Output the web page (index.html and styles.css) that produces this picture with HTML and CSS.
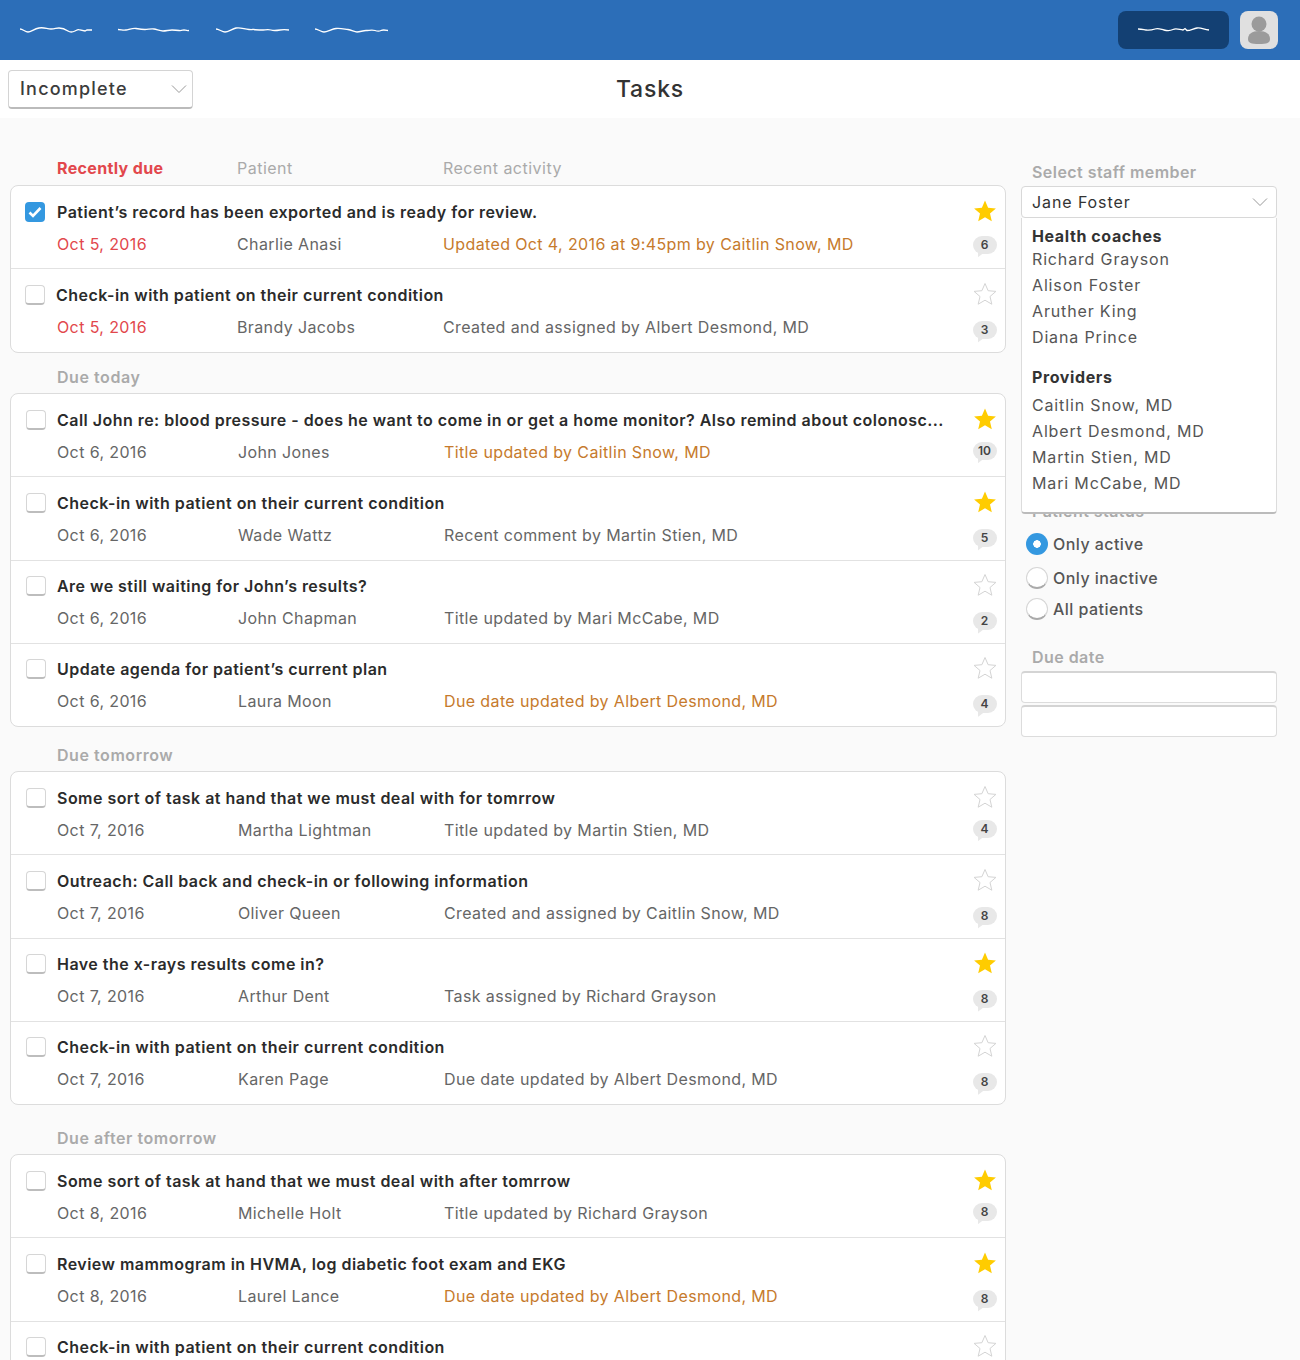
FILE: index.html
```html
<!DOCTYPE html>
<html lang="en">
<head>
    <meta charset="UTF-8">
    <meta name="viewport" content="width=device-width, initial-scale=1.0">
    <title>Tasks</title>
    <link rel="stylesheet" href="styles.css">
</head>
<body>
    <svg class="sprites" width="0" height="0">
        <symbol id="star" viewBox="0 0 24 24"><path d="M12 1.5l3.1 7.2 7.8.7-5.900 5.100 1.800 7.700L12 18.200l-6.800 4 1.800-7.700-5.900-5.100 7.800-.7z"/></symbol>
        <symbol id="chevron" viewBox="0 0 16 10"><path d="M1 1.5l7 7 7-7" fill="none" stroke="#999" stroke-width="1"/></symbol>
    </svg>

    <header class="topbar">
        <nav class="topnav">
            <svg class="squiggle" width="73" height="10" viewBox="0 0 73 10"><path d="M0 4c3 0 5 3 8 3s6-3 11-4 8 1 12 1 5-1 8-1 6 1 9 3 5 1 7 0 3-2 5-1l5 1 2-1 5 0"/></svg>
            <svg class="squiggle" width="73" height="10" viewBox="0 0 73 10"><path d="M0 4.500c3 0 5 1 8 .5s7-2 10-1.500 6 1 9 1 6-1 9-.5 6 2 9 2 6-1 9-1 5 0 7 .5 4-.5 5-.5 3 1 5 .5"/></svg>
            <svg class="squiggle" width="73" height="10" viewBox="0 0 73 10"><path d="M0 4c3 0 6 3 9 3s7-3 11-4 8 1 13 1.500 3-.5 5 0 5 .5 8 .5 6-1 9 0 6 .5 9 0 5-.5 9 0"/></svg>
            <svg class="squiggle" width="73" height="10" viewBox="0 0 73 10"><path d="M0 4c3 0 6 3 9 3s8-3 12-3.500 8 .5 12 1 6 2.500 9 2.500 6-1.500 9-1.500 6-1 9 0 4 1 6 0 4-.5 7 0"/></svg>
        </nav>
        <button class="topbtn" type="button">
            <svg class="squiggle" width="73" height="10" viewBox="0 0 73 10"><path d="M0 4c4 0 5 .5 8 1s6 0 9-1 5 0 9 1 6 1 9-.5 6 0 10 .5l2-1.500 2 2c4 0 6-2 10-2.500s6 1 12 2"/></svg>
        </button>
        <div class="avatar">
            <svg width="38" height="38" viewBox="0 0 38 38"><circle cx="19" cy="13" r="7.500"/><path d="M8 28c0-5 4-8 11-8s11 3 11 8c0 4-3 5-11 5s-11-1-11-5z"/></svg>
        </div>
    </header>

    <div class="subbar">
        <div class="filter">
            <span>Incomplete</span>
            <svg width="16" height="10"><use href="#chevron"/></svg>
        </div>
        <h1>Tasks</h1>
    </div>

    <div class="main">
        <div class="tasks">
            <div class="columns">
                <span class="col-due">Recently due</span>
                <span class="col-who">Patient</span>
                <span>Recent activity</span>
            </div>

            <section class="card card-recent">
                <div class="row">
                    <span class="check checked"><svg width="14" height="12" viewBox="0 0 14 12"><path d="M1.500 6.500l3.500 3.500 7.500-8" fill="none" stroke="#fff" stroke-width="2.600"/></svg></span>
                    <div class="info">
                        <div class="title">Patient’s record has been exported and is ready for review.</div>
                        <div class="meta"><span class="due late">Oct 5, 2016</span><span class="who">Charlie Anasi</span><span class="activity new">Updated Oct 4, 2016 at 9:45pm by Caitlin Snow, MD</span></div>
                    </div>
                    <div class="side"><svg class="star on"><use href="#star"/></svg><span class="badge">6</span></div>
                </div>
                <div class="row">
                    <span class="check"></span>
                    <div class="info">
                        <div class="title title-tight">Check-in with patient on their current condition</div>
                        <div class="meta"><span class="due late">Oct 5, 2016</span><span class="who">Brandy Jacobs</span><span class="activity">Created and assigned by Albert Desmond, MD</span></div>
                    </div>
                    <div class="side"><svg class="star"><use href="#star"/></svg><span class="badge">3</span></div>
                </div>
            </section>

            <h2 class="group group-today">Due today</h2>
            <section class="card">
                <div class="row">
                    <span class="check"></span>
                    <div class="info">
                        <div class="title">Call John re: blood pressure - does he want to come in or get a home monitor? Also remind about colonosc...</div>
                        <div class="meta"><span class="due">Oct 6, 2016</span><span class="who">John Jones</span><span class="activity new">Title updated by Caitlin Snow, MD</span></div>
                    </div>
                    <div class="side"><svg class="star on"><use href="#star"/></svg><span class="badge">10</span></div>
                </div>
                <div class="row">
                    <span class="check"></span>
                    <div class="info">
                        <div class="title">Check-in with patient on their current condition</div>
                        <div class="meta"><span class="due">Oct 6, 2016</span><span class="who">Wade Wattz</span><span class="activity">Recent comment by Martin Stien, MD</span></div>
                    </div>
                    <div class="side"><svg class="star on"><use href="#star"/></svg><span class="badge">5</span></div>
                </div>
                <div class="row">
                    <span class="check"></span>
                    <div class="info">
                        <div class="title">Are we still waiting for John’s results?</div>
                        <div class="meta"><span class="due">Oct 6, 2016</span><span class="who">John Chapman</span><span class="activity">Title updated by Mari McCabe, MD</span></div>
                    </div>
                    <div class="side"><svg class="star"><use href="#star"/></svg><span class="badge">2</span></div>
                </div>
                <div class="row">
                    <span class="check"></span>
                    <div class="info">
                        <div class="title">Update agenda for patient’s current plan</div>
                        <div class="meta"><span class="due">Oct 6, 2016</span><span class="who">Laura Moon</span><span class="activity new">Due date updated by Albert Desmond, MD</span></div>
                    </div>
                    <div class="side"><svg class="star"><use href="#star"/></svg><span class="badge">4</span></div>
                </div>
            </section>

            <h2 class="group group-tomorrow">Due tomorrow</h2>
            <section class="card">
                <div class="row">
                    <span class="check"></span>
                    <div class="info">
                        <div class="title">Some sort of task at hand that we must deal with for tomrrow</div>
                        <div class="meta"><span class="due">Oct 7, 2016</span><span class="who">Martha Lightman</span><span class="activity">Title updated by Martin Stien, MD</span></div>
                    </div>
                    <div class="side"><svg class="star"><use href="#star"/></svg><span class="badge">4</span></div>
                </div>
                <div class="row">
                    <span class="check"></span>
                    <div class="info">
                        <div class="title">Outreach: Call back and check-in or following information</div>
                        <div class="meta"><span class="due">Oct 7, 2016</span><span class="who">Oliver Queen</span><span class="activity">Created and assigned by Caitlin Snow, MD</span></div>
                    </div>
                    <div class="side"><svg class="star"><use href="#star"/></svg><span class="badge">8</span></div>
                </div>
                <div class="row">
                    <span class="check"></span>
                    <div class="info">
                        <div class="title">Have the x-rays results come in?</div>
                        <div class="meta"><span class="due">Oct 7, 2016</span><span class="who">Arthur Dent</span><span class="activity">Task assigned by Richard Grayson</span></div>
                    </div>
                    <div class="side"><svg class="star on"><use href="#star"/></svg><span class="badge">8</span></div>
                </div>
                <div class="row">
                    <span class="check"></span>
                    <div class="info">
                        <div class="title">Check-in with patient on their current condition</div>
                        <div class="meta"><span class="due">Oct 7, 2016</span><span class="who">Karen Page</span><span class="activity">Due date updated by Albert Desmond, MD</span></div>
                    </div>
                    <div class="side"><svg class="star"><use href="#star"/></svg><span class="badge">8</span></div>
                </div>
            </section>

            <h2 class="group group-after">Due after tomorrow</h2>
            <section class="card">
                <div class="row">
                    <span class="check"></span>
                    <div class="info">
                        <div class="title">Some sort of task at hand that we must deal with after tomrrow</div>
                        <div class="meta"><span class="due">Oct 8, 2016</span><span class="who">Michelle Holt</span><span class="activity">Title updated by Richard Grayson</span></div>
                    </div>
                    <div class="side"><svg class="star on"><use href="#star"/></svg><span class="badge">8</span></div>
                </div>
                <div class="row">
                    <span class="check"></span>
                    <div class="info">
                        <div class="title">Review mammogram in HVMA, log diabetic foot exam and EKG</div>
                        <div class="meta"><span class="due">Oct 8, 2016</span><span class="who">Laurel Lance</span><span class="activity new">Due date updated by Albert Desmond, MD</span></div>
                    </div>
                    <div class="side"><svg class="star on"><use href="#star"/></svg><span class="badge">8</span></div>
                </div>
                <div class="row">
                    <span class="check"></span>
                    <div class="info">
                        <div class="title">Check-in with patient on their current condition</div>
                    </div>
                    <div class="side"><svg class="star"><use href="#star"/></svg></div>
                </div>
            </section>
        </div>

        <aside class="filters">
            <div class="field-label">Select staff member</div>
            <div class="staff">
                <div class="staff-select">
                    <span>Jane Foster</span>
                    <svg width="16" height="10"><use href="#chevron"/></svg>
                </div>
                <div class="staff-menu">
                    <div class="menu-head">Health coaches</div>
                    <div class="menu-item">Richard Grayson</div>
                    <div class="menu-item">Alison Foster</div>
                    <div class="menu-item">Aruther King</div>
                    <div class="menu-item">Diana Prince</div>
                    <div class="menu-head menu-head-second">Providers</div>
                    <div class="menu-item">Caitlin Snow, MD</div>
                    <div class="menu-item">Albert Desmond, MD</div>
                    <div class="menu-item">Martin Stien, MD</div>
                    <div class="menu-item">Mari McCabe, MD</div>
                </div>
            </div>

            <div class="field-label status-label">Patient status</div>
            <div class="radio radio-active"><span class="dot selected"></span>Only active</div>
            <div class="radio radio-inactive"><span class="dot"></span>Only inactive</div>
            <div class="radio radio-all"><span class="dot"></span>All patients</div>

            <div class="field-label date-label">Due date</div>
            <div class="date-input"></div>
            <div class="date-input"></div>
        </aside>
    </div>
</body>
</html>
```

FILE: styles.css
```css
/* Global Styles */
html, body {
    height: 1360px;
    overflow: hidden;
}
body {
    margin: 0;
    background-color: #fafafa;
    color: #333;
    font-family: Inter, "Open Sans", Arial, sans-serif;
    font-size: 16px;
}
.sprites {
    position: absolute;
}

/* Top bar */
.topbar {
    height: 60px;
    background-color: #2c6eb8;
    display: flex;
    align-items: center;
    padding: 0 22px 0 20px;
}
.topnav {
    display: flex;
    gap: 25.2px;
    flex: 1;
}
.squiggle {
    display: block;
    fill: none;
    stroke: #fff;
    stroke-width: 1.3;
}
.topbtn {
    width: 111px;
    height: 38px;
    background-color: #134073;
    border: none;
    border-radius: 8px;
    padding: 0 0 0 20px;
    margin-right: 11px;
}
.avatar {
    width: 38px;
    height: 38px;
    background-color: #e0e0e0;
    border-radius: 8px;
    fill: #9b9b9b;
}
.avatar svg {
    display: block;
}

/* Sub bar */
.subbar {
    height: 58px;
    background-color: #fff;
    display: flex;
    align-items: center;
    position: relative;
    padding-left: 8px;
}
.subbar h1 {
    position: absolute;
    left: 0;
    right: 0;
    margin: 0;
    text-align: center;
    font-size: 23px;
    font-weight: 500;
    letter-spacing: 0.8px;
    color: #333;
    pointer-events: none;
}
.filter {
    width: 185px;
    height: 39px;
    box-sizing: border-box;
    background-color: #fff;
    border: 1px solid #d4d4d4;
    border-bottom: 2px solid #bbb;
    border-radius: 4px;
    display: flex;
    align-items: center;
    justify-content: space-between;
    padding: 0 5px 0 11px;
    font-size: 18px;
    font-weight: 500;
    letter-spacing: 1.2px;
    color: #3c3c3c;
}

/* Task list */
.main {
    display: flex;
    align-items: flex-start;
    padding-left: 10px;
}
.tasks {
    width: 996px;
    flex: none;
}
.columns {
    height: 67px;
    box-sizing: border-box;
    padding: 40px 0 0 47px;
    display: flex;
    line-height: 20px;
    letter-spacing: 0.48px;
    color: #aaa;
}
.col-due {
    width: 180px;
    color: #e2474c;
    font-weight: 700;
    letter-spacing: 0.35px;
}
.col-who {
    width: 206px;
}
.card {
    background-color: #fff;
    border: 1px solid #dcdcdc;
    border-radius: 8px;
}
.row {
    height: 83.25px;
    box-sizing: border-box;
    border-top: 1px solid #e2e2e2;
    display: flex;
    padding-left: 15px;
}
.row:first-child {
    height: 82.25px;
    border-top: none;
}
.check {
    width: 20px;
    height: 20px;
    box-sizing: border-box;
    flex: none;
    margin-top: 15.6px;
    background-color: #fff;
    border: 1px solid #d6d6d6;
    border-bottom: 2px solid #bdbdbd;
    border-radius: 4px;
}
.check.checked {
    background-color: #3498e0;
    border: none;
    display: flex;
    align-items: center;
    justify-content: center;
}
.info {
    flex: 1;
    min-width: 0;
    padding: 15.6px 0 0 11px;
}
.title {
    font-size: 16px;
    font-weight: 600;
    line-height: 20px;
    letter-spacing: 0.47px;
    color: #2b2b2b;
    white-space: nowrap;
}
.meta {
    display: flex;
    margin-top: 12px;
    line-height: 20px;
    letter-spacing: 0.38px;
    color: #666;
}
.due {
    width: 181px;
    flex: none;
}
.due.late {
    color: #e2474c;
}
.who {
    width: 206px;
    flex: none;
}
.activity.new {
    color: #c67a2c;
}
.side {
    width: 49px;
    flex: none;
    display: flex;
    flex-direction: column;
    align-items: center;
    padding: 12.6px 0 0 8px;
    box-sizing: border-box;
}
.star {
    width: 24px;
    height: 24px;
    fill: #fff;
    stroke: #d4d4d4;
    stroke-width: 1;
}
.star.on {
    fill: #ffcc00;
    stroke: none;
}
.badge {
    position: relative;
    width: 24px;
    height: 18px;
    margin-top: 15px;
    background-color: #e8e8e8;
    border-radius: 9px;
    font-size: 12px;
    font-weight: 600;
    line-height: 18px;
    text-align: center;
    color: #444;
}
.row:first-child .badge {
    margin-top: 11px;
}
.card-recent .row:first-child .badge {
    margin-top: 13px;
}
.badge::after {
    content: "";
    position: absolute;
    left: 5px;
    top: 16px;
    width: 8px;
    height: 6px;
    background-color: #e8e8e8;
    clip-path: polygon(0 100%, 100% 0, 0 0);
}

/* First card sits a pixel to the left of the others */
.card-recent .row {
    padding-left: 14px;
}
.card-recent .info {
    padding-left: 12px;
}
.card-recent .due {
    width: 180px;
}
.card-recent .title-tight {
    margin-left: -1px;
}

.group {
    height: 25px;
    margin: 0;
    padding-left: 47px;
    font-size: 16px;
    font-weight: 600;
    line-height: 18px;
    letter-spacing: 0.55px;
    color: #aaa;
}
.group-today {
    margin-top: 15.5px;
}
.group-tomorrow {
    margin-top: 19px;
}
.group-after {
    margin-top: 24px;
}

/* Sidebar */
.filters {
    width: 256px;
    flex: none;
    margin-left: 15px;
    padding-top: 45px;
}
.field-label {
    padding-left: 11px;
    font-size: 16px;
    font-weight: 600;
    line-height: 18px;
    letter-spacing: 0.45px;
    color: #aaa;
}
.staff {
    position: relative;
    margin-top: 5px;
}
.staff-select {
    height: 32px;
    box-sizing: border-box;
    background-color: #fff;
    border: 1px solid #d8d8d8;
    border-radius: 4px;
    display: flex;
    align-items: center;
    justify-content: space-between;
    padding: 0 8px 0 10px;
    color: #333;
    letter-spacing: 0.9px;
}
.staff-menu {
    position: absolute;
    left: 0;
    right: 0;
    top: 32px;
    height: 296px;
    box-sizing: border-box;
    background-color: #fff;
    border: 1px solid #dcdcdc;
    border-top: none;
    border-bottom: 2px solid #bbb;
    border-radius: 0 0 4px 4px;
    padding: 9px 10px 0;
    color: #555;
}
.menu-head {
    margin-bottom: 1px;
    font-size: 16px;
    font-weight: 700;
    line-height: 18px;
    letter-spacing: 0.6px;
    color: #333;
}
.menu-head-second {
    margin: 18px 0 6px;
}
.menu-item {
    line-height: 26px;
    letter-spacing: 0.85px;
}
.status-label {
    margin-top: 284px;
}
.radio {
    display: flex;
    align-items: center;
    padding-left: 5px;
    gap: 5px;
    height: 22px;
    color: #555;
    font-weight: 500;
    letter-spacing: 0.45px;
}
.radio-active {
    margin-top: 13px;
}
.radio-inactive {
    margin-top: 12px;
}
.radio-all {
    margin-top: 9px;
}
.dot {
    width: 22px;
    height: 22px;
    box-sizing: border-box;
    background-color: #fff;
    border: 1px solid #d6d6d6;
    border-bottom: 2px solid #aaa;
    border-radius: 50%;
}
.dot.selected {
    background: radial-gradient(circle, #fff 0 3.5px, #3498e0 4px);
    border: none;
}
.date-label {
    margin-top: 28px;
}
.date-input {
    height: 32px;
    box-sizing: border-box;
    margin-top: 2px;
    background-color: #fff;
    border: 1px solid #dcdcdc;
    border-top: 2px solid #d4d4d4;
    border-radius: 4px;
}
.date-label + .date-input {
    margin-top: 5px;
}
```
